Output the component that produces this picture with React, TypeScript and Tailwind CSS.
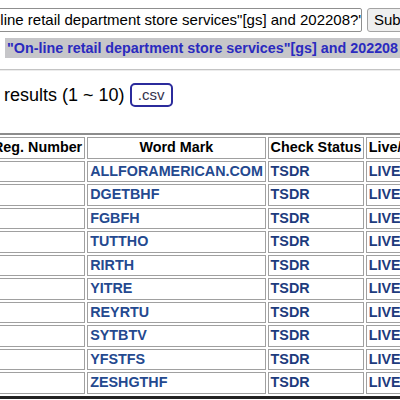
const marks = [
  'ALLFORAMERICAN.COM',
  'DGETBHF',
  'FGBFH',
  'TUTTHO',
  'RIRTH',
  'YITRE',
  'REYRTU',
  'SYTBTV',
  'YFSTFS',
  'ZESHGTHF',
]

const query = '"On-line retail department store services"[gs] and 202208?\''

export default function App() {
  return (
    <div className="w-[400px] h-[400px] overflow-hidden bg-white font-['Liberation_Sans',Arial,sans-serif] text-black">
      {/* search form */}
      <div className="pt-[8px] -ml-[33px] flex gap-[5px] whitespace-nowrap">
        <div className="w-[395px] h-[24px] shrink-0 overflow-hidden border border-[#8f8f8f] rounded-[2px] px-[2px] text-[15px] leading-[22px]">
          {query}
        </div>
        <div className="h-[24px] shrink-0 px-[6px] border border-[#a3a3a3] rounded-[3px] bg-[#efefef] text-[15px] leading-[22px]">
          Submit
        </div>
      </div>

      {/* query echo */}
      <div className="mt-[6px] ml-[5px] whitespace-nowrap">
        <div className="h-[20px] pl-[2px] bg-[#c6c6c9] text-[#2a2abf] font-bold text-[14.33px] leading-[20px]">
          {query.replace("?'", '')}
        </div>
      </div>

      <div className="mt-[11px] h-[2px] border-t border-[#c4c4c4] border-b-[#ececec] border-b" />

      {/* result count */}
      <div className="mt-[12px] -ml-[21px] flex items-center h-[24px] whitespace-nowrap">
        <span className="text-[18px] leading-[24px]">10 results (1 ~ 10)</span>
        <span className="ml-[5px] h-[24px] w-[43px] flex items-center justify-center border-2 border-[#2b2b9c] rounded-[5px] text-[15px] text-[#33334d]">
          .csv
        </span>
      </div>

      {/* results table */}
      <table className="mt-[26px] -ml-[14px] w-[465px] table-fixed border-separate border-spacing-[2px] border-t-2 border-l-2 border-r-[3px] border-b-[3px] border-t-[#8c8c8c] border-l-[#8c8c8c] border-r-[#222] border-b-[#222] text-[14.33px] leading-[17.5px] font-bold whitespace-nowrap">
        <thead>
          <tr>
            <th className="w-[95px] border border-[#a0a0a0] px-[2px] py-px text-center">Reg. Number</th>
            <th className="w-[178px] border border-[#a0a0a0] px-[2px] py-px text-center">Word Mark</th>
            <th className="w-[96px] border border-[#a0a0a0] px-[2px] py-px text-center">Check Status</th>
            <th className="w-[80px] border border-[#a0a0a0] px-[2px] py-px text-left overflow-hidden">Live/Dead</th>
          </tr>
        </thead>
        <tbody>
          {marks.map(m => (
            <tr key={m}>
              <td className="border border-[#a0a0a0] px-[2px] py-px">&nbsp;</td>
              <td className="border border-[#a0a0a0] px-[2px] py-px text-[#24498f]">{m}</td>
              <td className="border border-[#a0a0a0] px-[2px] py-px text-[#1d3b7d]">TSDR</td>
              <td className="border border-[#a0a0a0] px-[2px] py-px text-[#1d3b7d]">LIVE</td>
            </tr>
          ))}
        </tbody>
      </table>
    </div>
  )
}
